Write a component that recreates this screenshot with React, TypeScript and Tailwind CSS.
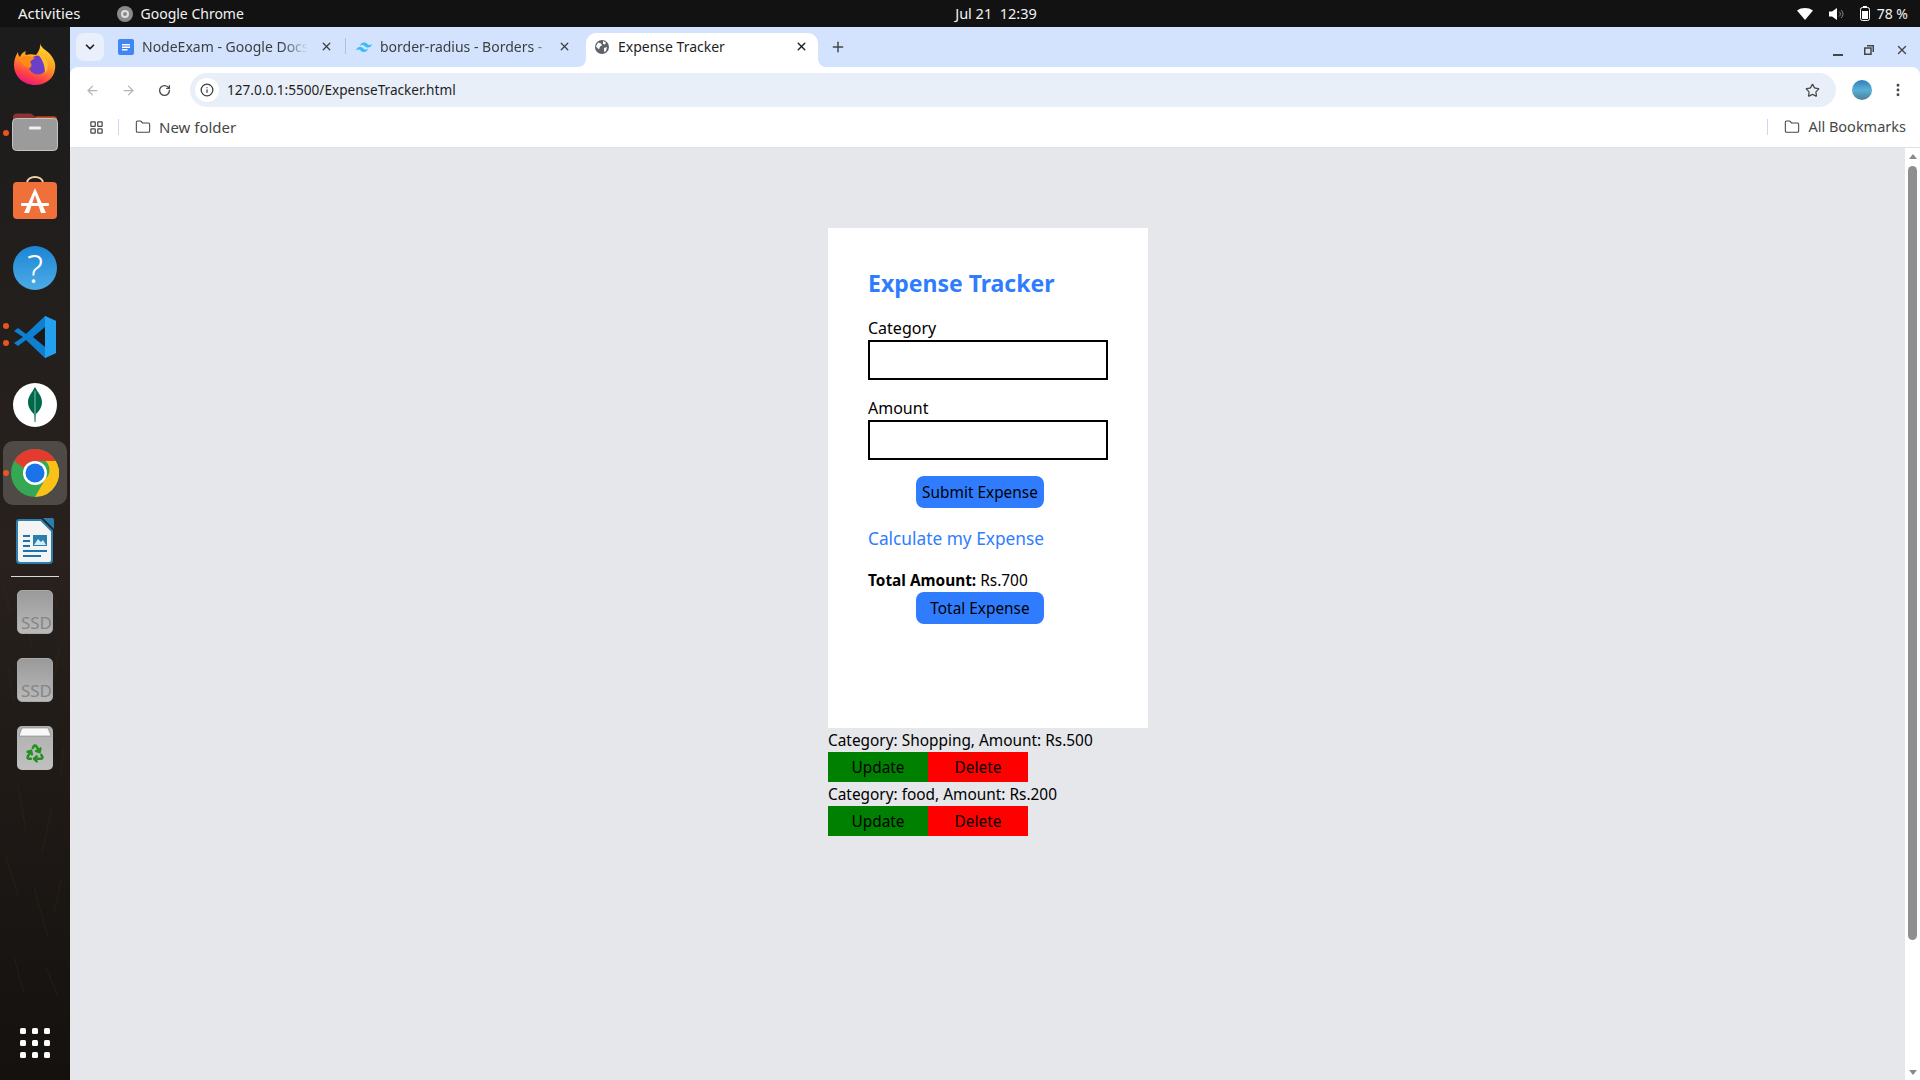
import React from 'react';
import { ArrowLeft, ArrowRight, ChevronDown, Folder, Info, LayoutGrid, Plus, Recycle, RotateCw, Star, X, EllipsisVertical } from 'lucide-react';

const uiFont = "font-['Noto_Sans',sans-serif]";

const Dot = ({ top }: { top: string }) => (
  <span className={`absolute left-[3px] h-[6px] w-[6px] rounded-full bg-[#e95420] ${top}`} />
);

const Firefox = () => (
  <svg width="44" height="44" viewBox="0 0 44 44">
    <defs>
      <linearGradient id="ffa" x1="0.7" y1="0" x2="0.3" y2="1">
        <stop offset="0" stopColor="#ffe033" />
        <stop offset="0.45" stopColor="#ff9a1f" />
        <stop offset="0.8" stopColor="#ff3a4a" />
        <stop offset="1" stopColor="#e3158c" />
      </linearGradient>
    </defs>
    <path d="M27 1c1 5 5 6 9 10 5 5 7 11 6 16-1 10-10 16-20 16C10 43 1 34 1 23c0-6 2-10 4-13 0 3 1 4 2 5 1-3 3-5 6-6-1 2-1 3 0 4 3-1 7-1 10 0 3-4 5-8 4-12z" fill="url(#ffa)" />
    <circle cx="25" cy="23" r="9.5" fill="#6d3fc9" />
    <path d="M25 13c6 0 10 5 10 10 0 3-1 6-3 8 0-8-3-15-7-18z" fill="#ffbd2e" />
    <path d="M6 17c4-3 10-4 16-1-2 1-4 3-5 4 2 2 2 4 0 6-5-1-9-4-11-9z" fill="#ff8a16" />
  </svg>
);

const Files = () => (
  <svg width="46" height="40" viewBox="0 3 46 39">
    <path d="M1 8a4 4 0 0 1 4-4h14l4 3h19a3 3 0 0 1 3 3v10H1z" fill="#8a3535" />
    <path d="M24 7h18a3 3 0 0 1 3 3v6H24z" fill="#c4501f" />
    <rect x="0.5" y="9" width="45" height="32" rx="4" fill="#9b9b9b" stroke="#c4c4c4" />
    <rect x="17" y="17" width="12" height="3" rx="1" fill="#f1f1f1" />
  </svg>
);

const AppStore = () => (
  <svg width="46" height="44" viewBox="0 0 46 44" className="-mt-[4px]">
    <path d="M15 7c0-8 16-8 16 0" fill="none" stroke="#f3d6a8" strokeWidth="2" />
    <rect x="1" y="6" width="44" height="37" rx="4" fill="#f0703a" />
    <path d="M23 12 12 37h5l6-18 6 18h5z" fill="#fff" />
    <rect x="9" y="27" width="28" height="3" rx="1" fill="#fff" />
  </svg>
);

const Help = () => (
  <div className="flex h-[44px] w-[44px] items-center justify-center rounded-full bg-gradient-to-b from-[#1b85d4] to-[#4bace6] text-[38px] font-light leading-none text-white font-['Noto_Sans',sans-serif]">?</div>
);

const VsCode = () => (
  <svg width="44" height="44" viewBox="0 0 44 44">
    <path d="M32 1 43 6v32L32 43 13 25l-8 6-4-3 9-6-9-6 4-3 8 6z" fill="#0f7fd0" />
    <path d="M32 1 43 6v32L32 43z" fill="#24a0f0" />
    <path d="M32 12 20 22l12 10z" fill="#1a1a1a" />
  </svg>
);

const Mongo = () => (
  <div className="flex h-[44px] w-[44px] items-center justify-center rounded-full bg-white">
    <svg width="16" height="36" viewBox="0 0 16 36">
      <path d="M8 0c3 6 7 9 7 15 0 6-4 10-6 12l-.5 8h-1L7 27c-2-2-6-6-6-12C1 9 5 6 8 0z" fill="#00684a" />
      <path d="M8 4v31" stroke="#a9d8c4" strokeWidth="0.8" />
    </svg>
  </div>
);

const Chrome = () => (
  <svg width="48" height="48" viewBox="0 0 48 48">
    <circle cx="24" cy="24" r="24" fill="#34a853" />
    <path d="M24 0a24 24 0 0 1 20.800 12H24a12 12 0 0 0-11 7L3.200 12A24 24 0 0 1 24 0z" fill="#e33b2e" />
    <path d="M44.800 12A24 24 0 0 1 24 48l10.400-18a12 12 0 0 0 0-18z" fill="#fbc116" />
    <circle cx="24" cy="24" r="12" fill="#fff" />
    <circle cx="24" cy="24" r="9.500" fill="#1a73e8" />
  </svg>
);

const Writer = () => (
  <svg width="38" height="46" viewBox="0 0 38 46">
    <path d="M3 2h22l11 11v29a3 3 0 0 1-3 3H4a3 3 0 0 1-3-3V4a2 2 0 0 1 2-2z" fill="#f4f4f4" stroke="#2a7fae" strokeWidth="2" />
    <path d="M27 0h9a2 2 0 0 1 2 2v9z" fill="#2a7fae" />
    <path d="M7 17h7v2H7zM7 22h7v2H7zM7 27h7v2H7zM7 32h24v2H7zM7 37h18v2H7z" fill="#1b75ab" />
    <rect x="17" y="17" width="14" height="11" fill="#2a7fae" />
    <path d="M18 27l4-6 3 3 2-2 3 5z" fill="#d7ecf7" />
  </svg>
);

const Ssd = () => (
  <div className="flex h-[44px] w-[36px] items-end justify-end overflow-hidden rounded-[5px] border border-[#a8a8a8] bg-gradient-to-b from-[#9a9a9a] to-[#bababa] text-[17px] leading-[20px] text-[#858585] font-['Noto_Sans',sans-serif]">SSD</div>
);

const Trash = () => (
  <div className="relative flex h-[44px] w-[36px] items-center justify-center rounded-[5px] bg-gradient-to-b from-[#b0b0b0] to-[#c0c0c0]">
    <svg width="32" height="10" viewBox="0 0 32 10" className="absolute left-[2px] top-[1px]">
      <path d="M3 1h26l3 8H0z" fill="#f8f8f8" stroke="#808080" strokeWidth="0.600" />
    </svg>
    <Recycle size={20} strokeWidth={3} className="mt-[10px] text-[#259020]" />
  </div>
);

// dark grass wallpaper showing behind the dock
const DockTexture = () => {
  const strokes = [
    'M8 640l6 34', 'M40 700l10 40', 'M60 620l-6 30', 'M18 760l8 44', 'M52 780l-10 46',
    'M6 830l12 38', 'M34 860l14 50', 'M62 850l-8 36', 'M14 930l10 36', 'M46 940l12 30',
    'M28 600l4 24', 'M64 720l-4 30', 'M4 560l6 26', 'M50 560l8 20',
  ];
  return (
    <svg className="absolute inset-0" width="70" height="1053" viewBox="0 0 70 1053">
      {strokes.map((d, i) => (
        <path key={i} d={d} stroke="#4a3018" strokeWidth="1" fill="none" opacity="0.300" />
      ))}
    </svg>
  );
};

const Dock = () => {
  const row = 'relative flex h-[68px] w-full shrink-0 items-center justify-center';
  return (
    <aside className="relative flex h-full w-[70px] shrink-0 flex-col overflow-hidden bg-gradient-to-b from-[#1c1c1c] via-[#28211d] to-[#14110e] pt-[3px]">
      <DockTexture />
      <div className={row}><Firefox /></div>
      <div className={row}><Dot top="top-[32px]" /><Files /></div>
      <div className={row}><AppStore /></div>
      <div className={row}><Help /></div>
      <div className={`${row} mt-[1px]`}><Dot top="top-[20px]" /><span className="absolute left-[3px] top-[37px] h-[6px] w-[6px] rounded-full bg-[#e95420]" /><VsCode /></div>
      <div className={row}><Mongo /></div>
      <div className={row}>
        <div className="flex h-[64px] w-[64px] items-center justify-center rounded-[10px] bg-[#4f4a46]"><Chrome /></div>
        <Dot top="top-[31px]" />
      </div>
      <div className={row}><Writer /></div>
      <div className="relative mx-auto mt-[1px] h-[1px] w-[48px] shrink-0 bg-[#d8d8d8]" />
      <div className={`${row} mt-[1px]`}><Ssd /></div>
      <div className={row}><Ssd /></div>
      <div className={row}><Trash /></div>
      <div className="relative mt-auto mb-[22px] grid w-[30px] grid-cols-3 gap-[6px] self-center">
        {Array.from({ length: 9 }).map((_, i) => (
          <span key={i} className="h-[6px] w-[6px] rounded-[1.5px] bg-white" />
        ))}
      </div>
    </aside>
  );
};

const TopBar = () => (
  <header className={`flex h-[27px] shrink-0 items-center justify-between bg-[#121212] text-[14px] text-[#f2f2f2] ${uiFont}`}>
    <div className="flex w-1/3 items-center">
      <span className="ml-[18px] text-[15px]">Activities</span>
      <span className="ml-[36px] mr-[8px] flex h-[16px] w-[16px] items-center justify-center rounded-full bg-[#8a8a8a]">
        <span className="h-[8px] w-[8px] rounded-full border-2 border-[#e0e0e0]" />
      </span>
      <span>Google Chrome</span>
    </div>
    <div className="ml-[72px] text-[14.5px]">Jul 21&nbsp;&nbsp;12:39</div>
    <div className="flex w-1/3 items-center justify-end gap-[16px] pr-[12px]">
      <svg width="16" height="12" viewBox="0 0 16 12"><path d="M0 2.500C4.500-.8 11.500-.8 16 2.500L8 12z" fill="#fff" /></svg>
      <svg width="15" height="14" viewBox="0 0 15 14">
        <path d="M0 4.500h3L8 1v12L3 9.500H0z" fill="#fff" />
        <path d="M10 4.500a3 3 0 0 1 0 5M12 3a5 5 0 0 1 0 8" fill="none" stroke="#888" />
      </svg>
      <span className="flex items-center gap-[7px]">
        <svg width="10" height="15" viewBox="0 0 10 15">
          <rect x="0.500" y="1.500" width="9" height="13" rx="2" fill="none" stroke="#fff" />
          <rect x="3" y="0" width="4" height="2" fill="#fff" />
          <rect x="2" y="5" width="6" height="8" fill="#fff" />
        </svg>
        <span>78 %</span>
      </span>
    </div>
  </header>
);

const TabStrip = () => (
  <div className={`flex h-[40px] shrink-0 items-end bg-[#d3e3fd] text-[14px] text-[#3c4043] ${uiFont}`}>
    <div className="mb-[6px] ml-[6px] flex h-[28px] w-[28px] items-center justify-center rounded-[8px] bg-[#e9f0fc]">
      <ChevronDown size={14} strokeWidth={3} className="text-[#1f1f1f]" />
    </div>
    <div className="flex h-[34px] w-[238px] items-center self-end pb-[7px] pl-[14px]">
      <svg width="16" height="16" viewBox="0 0 16 16" className="shrink-0">
        <rect width="16" height="16" rx="2" fill="#4285f4" />
        <path d="M4 5h8v1.500H4zM4 7.500h8V9H4zM4 10h5.500v1.500H4z" fill="#fff" />
      </svg>
      <span className="ml-[8px] w-[166px] overflow-hidden whitespace-nowrap [mask-image:linear-gradient(to_right,black_85%,transparent)]">NodeExam - Google Docs</span>
      <X size={13} strokeWidth={2.4} className="ml-[12px] shrink-0" />
    </div>
    <div className="mb-[13px] ml-[3px] h-[16px] w-[1px] bg-[#a8c0e4]" />
    <div className="flex h-[34px] w-[240px] items-center self-end pb-[7px] pl-[10px]">
      <svg width="16" height="10" viewBox="0 0 16 10" className="shrink-0">
        <path d="M4 4c.5-2.500 2-3.500 4-3.500 3 0 3.500 2 5 2.500 1 .3 2 0 3-1-.5 2.500-2 3.500-4 3.500-3 0-3.500-2-5-2.500-1-.3-2 0-3 1zM0 8.500C.5 6 2 5 4 5c3 0 3.500 2 5 2.500 1 .3 2 0 3-1C11.500 9 10 10 8 10c-3 0-3.500-2-5-2.500-1-.3-2 0-3 1z" fill="#38bdf8" />
      </svg>
      <span className="ml-[8px] w-[170px] whitespace-nowrap [mask-image:linear-gradient(to_right,black_90%,transparent)]">border-radius - Borders -</span>
      <X size={13} strokeWidth={2.4} className="ml-[8px] shrink-0" />
    </div>
    <div className="relative flex h-[34px] w-[232px] items-center self-end rounded-t-[10px] bg-white pb-[7px] pl-[9px]">
      <span className="absolute bottom-0 left-[-8px] h-[8px] w-[8px] bg-white"><span className="block h-full w-full rounded-br-[8px] bg-[#d3e3fd]" /></span>
      <span className="absolute bottom-0 right-[-8px] h-[8px] w-[8px] bg-white"><span className="block h-full w-full rounded-bl-[8px] bg-[#d3e3fd]" /></span>
      <svg width="14" height="14" viewBox="0 0 14 14" className="shrink-0">
        <circle cx="7" cy="7" r="7" fill="#5f6368" />
        <path d="M3 2.500l3 1 1 2-2 1-1 3-3-3zM8 1l3 1.500-1 2-2-.5zM9 8l3-1-1 4-2 1z" fill="#fff" />
      </svg>
      <span className="ml-[9px] w-[177px] whitespace-nowrap text-[#1f1f1f]">Expense Tracker</span>
      <X size={13} strokeWidth={2.6} className="shrink-0 text-[#1f1f1f]" />
    </div>
    <Plus size={16} strokeWidth={2.2} className="mb-[12px] ml-[12px] text-[#444746]" />
    <div className="mb-[10px] ml-auto flex items-center gap-[21px] pr-[11px] text-[#444746]">
      <span className="mt-[10px] h-[2px] w-[10px] bg-[#444746]" />
      <svg width="10" height="10" viewBox="0 0 10 10">
        <path d="M3 .750h6.250V7M.750 3h6.250v6.250H.750z" fill="none" stroke="#444746" strokeWidth="1.500" />
      </svg>
      <X size={14} strokeWidth={2.4} />
    </div>
  </div>
);

const Toolbar = () => (
  <div className="h-[40px] shrink-0 bg-[#d3e3fd]">
    <div className={`flex h-full w-full items-center rounded-t-[8px] bg-white pt-[6px] ${uiFont}`}>
      <ArrowLeft size={15} strokeWidth={2} className="ml-[15px] text-[#b3b5b8]" />
      <ArrowRight size={15} strokeWidth={2} className="ml-[21px] text-[#b3b5b8]" />
      <RotateCw size={13} strokeWidth={2.4} className="ml-[22px] text-[#474747]" />
      <div className="ml-[19px] flex h-[34px] flex-1 items-center rounded-full bg-[#e9eff9]">
        <span className="ml-[5px] flex h-[24px] w-[24px] items-center justify-center rounded-full bg-white">
          <Info size={14} strokeWidth={2.2} className="text-[#3c4043]" />
        </span>
        <span className="ml-[8px] text-[13.6px] text-[#1f1f1f]">127.0.0.1:5500/ExpenseTracker.html</span>
        <Star size={15} strokeWidth={2} className="ml-auto mr-[16px] text-[#474747]" />
      </div>
      <div className="ml-[16px] h-[20px] w-[20px] rounded-full bg-gradient-to-b from-[#2f7fb8] via-[#5ab0d8] to-[#4d7f96]" />
      <EllipsisVertical size={16} strokeWidth={2.4} className="ml-[18px] mr-[14px] text-[#474747]" />
    </div>
  </div>
);

const BookmarkBar = () => (
  <div className={`flex h-[41px] shrink-0 items-center border-b border-[#dfe1e5] bg-white text-[14.5px] text-[#474747] ${uiFont}`}>
    <LayoutGrid size={15} strokeWidth={2} className="ml-[19px]" />
    <span className="ml-[14px] h-[16px] w-[1px] bg-[#c7d9f5]" />
    <Folder size={16} strokeWidth={1.6} className="ml-[16px]" />
    <span className="ml-[8px] text-[15px]">New folder</span>
    <span className="ml-auto h-[16px] w-[1px] bg-[#c7d9f5]" />
    <Folder size={16} strokeWidth={1.6} className="ml-[16px]" />
    <span className="ml-[8px] mr-[14px]">All Bookmarks</span>
  </div>
);

const ExpenseRow = ({ text }: { text: string }) => (
  <li>
    <div className="h-[24px] leading-[26px]">{text}</div>
    <div className="flex">
      <button className="h-[30px] w-[100px] bg-[#008000] pt-[2px]">Update</button>
      <button className="h-[30px] w-[100px] bg-[#ff0000] pt-[2px]">Delete</button>
    </div>
  </li>
);

const ExpenseTracker = () => (
  <div className={`ml-[758px] w-[320px] pt-[80px] text-[15.4px] text-black ${uiFont}`}>
    <div className="h-[500px] bg-white p-[40px]">
      <h1 className="-mt-[1px] h-[32px] text-[23px] font-bold leading-[32px] text-[#2f7cff]">Expense Tracker</h1>
      <div className="mt-[17px]">
        <label className="block h-[24px] text-[16px] leading-[24px]">Category</label>
        <input className="block h-[40px] w-[240px] border-2 border-black bg-white" />
      </div>
      <div className="mt-[16px]">
        <label className="block h-[24px] text-[16px] leading-[24px]">Amount</label>
        <input className="block h-[40px] w-[240px] border-2 border-black bg-white" />
      </div>
      <button className="ml-[48px] mt-[16px] block h-[32px] w-[128px] rounded-[8px] bg-[#2f7cff] pt-[2px]">Submit Expense</button>
      <h2 className="mt-[16px] h-[28px] text-[17.3px] leading-[30px] text-[#2f7cff]">Calculate my Expense</h2>
      <p className="mt-[16px] h-[24px] leading-[26px]"><b>Total Amount:</b> Rs.700</p>
      <button className="ml-[48px] block h-[32px] w-[128px] rounded-[8px] bg-[#2f7cff] pt-[2px]">Total Expense</button>
    </div>
    <ul>
      <ExpenseRow text="Category: Shopping, Amount: Rs.500" />
      <ExpenseRow text="Category: food, Amount: Rs.200" />
    </ul>
  </div>
);

const Scrollbar = () => (
  <div className="flex w-[15px] shrink-0 flex-col items-center bg-white">
    <div className="mt-[6px] h-0 w-0 border-x-[4px] border-b-[5px] border-x-transparent border-b-[#8a8a8a]" />
    <div className="mt-[7px] h-[774px] w-[9px] rounded-full bg-[#8f8f8f]" />
    <div className="mb-[5px] mt-auto h-0 w-0 border-x-[4px] border-t-[5px] border-x-transparent border-t-[#8a8a8a]" />
  </div>
);

export default function App() {
  return (
    <div className="flex h-[1080px] w-[1920px] flex-col overflow-hidden">
      <TopBar />
      <div className="flex min-h-0 flex-1">
        <Dock />
        <div className="flex min-w-0 flex-1 flex-col">
          <TabStrip />
          <Toolbar />
          <BookmarkBar />
          <div className="flex min-h-0 flex-1 bg-[#e5e7eb]">
            <div className="flex-1"><ExpenseTracker /></div>
            <Scrollbar />
          </div>
        </div>
      </div>
    </div>
  );
}
